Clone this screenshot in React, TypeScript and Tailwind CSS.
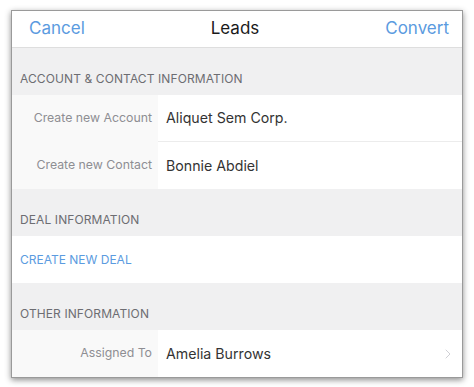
import { ChevronRight } from "lucide-react";

type Row = { label: string; value: string; chevron?: boolean };

function SectionHeader({ title }: { title: string }) {
  return (
    <div className="flex h-[47px] items-end bg-[#f0f0f1] px-[8px] pb-[7px] text-[12px] tracking-[0.1px] text-[#6d6d72]">
      {title}
    </div>
  );
}

function FieldRow({ row, last }: { row: Row; last?: boolean }) {
  return (
    <div className="flex h-[47px]">
      <div className="flex w-[146px] items-center justify-end bg-[#f9f9f9] pr-[6px] text-[12.3px] text-[#8e8e93]">
        {row.label}
      </div>
      <div
        className={`flex flex-1 items-center bg-white pl-[8px] pr-[6px] text-[14.2px] text-[#333] ${
          last ? "" : "border-b border-[#ececec]"
        }`}
      >
        <span className="flex-1">{row.value}</span>
        {row.chevron ? <ChevronRight size={16} strokeWidth={1.25} className="text-[#c7c7cc]" /> : null}
      </div>
    </div>
  );
}

export default function App() {
  const accountRows: Row[] = [
    { label: "Create new Account", value: "Aliquet Sem Corp." },
    { label: "Create new Contact", value: "Bonnie Abdiel" },
  ];

  return (
    <div className="h-[387px] w-[474px] bg-white pt-[10px] pl-[11px] font-['Inter',sans-serif]">
      <div className="w-[452px] overflow-hidden border border-[#9a9a9a] shadow-[0_2px_6px_rgba(0,0,0,0.45)]">
        <div className="flex h-[37px] items-center justify-between border-b border-[#dedede] bg-white pl-[17px] pr-[13px] text-[17px]">
          <span className="text-[#5b9be0]">Cancel</span>
          <span className="text-[#1a1a1a]">Leads</span>
          <span className="text-[#5b9be0]">Convert</span>
        </div>

        <SectionHeader title="ACCOUNT & CONTACT INFORMATION" />
        {accountRows.map((row, i) => (
          <FieldRow key={row.label} row={row} last={i === accountRows.length - 1} />
        ))}

        <SectionHeader title="DEAL INFORMATION" />
        <div className="flex h-[47px] items-center bg-white px-[8px] text-[12px] text-[#5b9be0]">
          CREATE NEW DEAL
        </div>

        <SectionHeader title="OTHER INFORMATION" />
        <FieldRow row={{ label: "Assigned To", value: "Amelia Burrows", chevron: true }} last />
      </div>
    </div>
  );
}
